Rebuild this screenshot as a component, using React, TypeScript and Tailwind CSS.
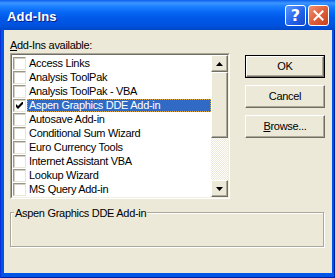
import React from 'react';

const items = [
  { name: 'Access Links', checked: false },
  { name: 'Analysis ToolPak', checked: false },
  { name: 'Analysis ToolPak - VBA', checked: false },
  { name: 'Aspen Graphics DDE Add-in', checked: true, selected: true },
  { name: 'Autosave Add-in', checked: false },
  { name: 'Conditional Sum Wizard', checked: false },
  { name: 'Euro Currency Tools', checked: false },
  { name: 'Internet Assistant VBA', checked: false },
  { name: 'Lookup Wizard', checked: false },
  { name: 'MS Query Add-in', checked: false },
];

const raised =
  'bg-[#ECE9D8] border border-t-white border-l-white border-b-[#716F64] border-r-[#716F64] shadow-[inset_-1px_-1px_0_#ACA899]';

const Arrow = ({ up }: { up?: boolean }) => (
  <svg width="7" height="4" viewBox="0 0 7 4">
    {up ? <polygon points="3.5,0 7,4 0,4" fill="#000" /> : <polygon points="0,0 7,0 3.5,4" fill="#000" />}
  </svg>
);

const CheckBox = ({ checked }: { checked: boolean }) => (
  <div className="w-[13px] h-[13px] shrink-0 bg-white border border-t-[#9A9788] border-l-[#9A9788] border-b-[#E8E6DA] border-r-[#E8E6DA] shadow-[inset_1px_1px_0_#D4D0C8] flex items-center justify-center">
    {checked && (
      <svg width="7" height="7" viewBox="0 0 7 7">
        <polygon points="0,2 2,4 6,0 7,0 7,2 2,7 0,5" fill="#000" />
      </svg>
    )}
  </div>
);

const PushButton = ({ children, isDefault }: { children: React.ReactNode; isDefault?: boolean }) =>
  isDefault ? (
    <div className="w-[80px] h-[23px] border border-black flex">
      <div className={`flex-1 ${raised} flex items-center justify-center`}>{children}</div>
    </div>
  ) : (
    <div className={`w-[80px] h-[23px] ${raised} flex items-center justify-center`}>{children}</div>
  );

export default function App() {
  return (
    <div className="w-[335px] h-[278px] flex flex-col bg-[#0055E5] shadow-[inset_1px_0_0_#0831D9,inset_-1px_0_0_#001DA0,inset_0_-1px_0_#001DA0] font-['Liberation_Sans',Arial,sans-serif] text-[11px] tracking-[-0.3px] text-black select-none">
      {/* title bar */}
      <div className="h-[30px] flex items-start bg-[linear-gradient(#0A5EEC_0%,#3D95FF_10%,#1A80FF_22%,#0868F6_40%,#0058E8_60%,#0054E3_78%,#0050D8_90%,#0046C4_100%)]">
        <span className="ml-[7px] mt-[9px] leading-[15px] text-[13px] font-bold tracking-[0.2px] text-white [text-shadow:1px_1px_0_#0A1E7A]">
          Add-Ins
        </span>
        <div className="ml-auto mr-[6px] mt-[5px] flex gap-[2px]">
          <div className="w-[21px] h-[21px] rounded-[3px] border border-white bg-[linear-gradient(135deg,#5A98FF,#2060E8_60%,#1848C8)] flex items-center justify-center">
            <span className="text-white font-bold text-[16px] leading-none tracking-normal font-['DejaVu_Sans',sans-serif]">?</span>
          </div>
          <div className="w-[21px] h-[21px] rounded-[3px] border border-white bg-[linear-gradient(135deg,#F09070,#E0603C_50%,#C8401E)] flex items-center justify-center">
            <svg width="11" height="11" viewBox="0 0 11 11">
              <path d="M1.5 1.5 L9.5 9.5 M9.5 1.5 L1.5 9.5" stroke="#fff" strokeWidth="2" strokeLinecap="square" />
            </svg>
          </div>
        </div>
      </div>

      {/* body */}
      <div className="flex-1 ml-[4px] mr-[3px] mb-[5px] bg-[#ECE9D8] pl-[6px] pt-[9px] flex flex-col">
        <div className="flex">
          <div className="w-[220px] flex flex-col">
            <div className="h-[13px] leading-[13px] mb-[1px]">
              <span className="underline">A</span>dd-Ins available:
            </div>
            <div className="h-[146px] border border-t-[#ACA899] border-l-[#ACA899] border-b-white border-r-white">
              <div className="h-full border border-t-[#716F64] border-l-[#716F64] border-b-[#F1EFE2] border-r-[#F1EFE2] bg-white flex">
                <div className="flex-1 pt-[1px] flex flex-col">
                  {items.map((it) => (
                    <div key={it.name} className="h-[14px] flex items-center">
                      <div className="ml-[1px]">
                        <CheckBox checked={it.checked} />
                      </div>
                      {it.selected ? (
                        <div className="ml-[1px] flex-1 h-[13px] bg-[#316AC5] border border-dotted border-[#D8A850] text-white leading-[11px] pl-[1px]">
                          {it.name}
                        </div>
                      ) : (
                        <div className="ml-[3px] leading-[14px]">{it.name}</div>
                      )}
                    </div>
                  ))}
                </div>
                {/* scrollbar */}
                <div className="w-[17px] flex flex-col">
                  <div className={`h-[17px] ${raised} flex items-center justify-center`}>
                    <Arrow up />
                  </div>
                  <div className={`h-[66px] ${raised}`} />
                  <div className="h-[42px] bg-[image:conic-gradient(#fff_25%,#ECE9D8_0_50%,#fff_0_75%,#ECE9D8_0)] bg-[length:2px_2px]" />
                  <div className={`h-[17px] ${raised} flex items-center justify-center`}>
                    <Arrow />
                  </div>
                </div>
              </div>
            </div>
          </div>
          <div className="ml-[15px] mt-[16px] flex flex-col gap-[7px]">
            <PushButton isDefault>OK</PushButton>
            <PushButton>Cancel</PushButton>
            <PushButton>
              <span>
                <span className="underline">B</span>rowse...
              </span>
            </PushButton>
          </div>
        </div>

        {/* group box */}
        <div className="relative mt-[13px] w-[314px] h-[35px] border border-[#ACA899] shadow-[inset_1px_1px_0_#fff,1px_1px_0_#fff]">
          <span className="absolute top-[-7px] left-[3px] px-[1px] leading-[14px] bg-[#ECE9D8]">Aspen Graphics DDE Add-in</span>
        </div>
      </div>
    </div>
  );
}
